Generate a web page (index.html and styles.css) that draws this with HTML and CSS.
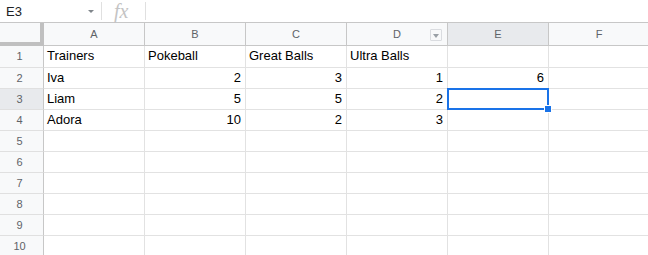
FILE: index.html
```html
<!DOCTYPE html>
<html lang="en">
<head>
    <meta charset="UTF-8">
    <meta name="viewport" content="width=device-width, initial-scale=1.0">
    <title>Pokeballs</title>
    <link rel="stylesheet" href="styles.css">
</head>
<body>
    <div class="toolbar">
        <div class="namebox">E3</div>
        <div class="namebox-arrow"></div>
        <div class="sep"></div>
        <div class="fx">fx</div>
        <div class="sep"></div>
    </div>
    <div class="sheet">
        <div class="corner"></div>
        <div class="col-head">A</div>
        <div class="col-head">B</div>
        <div class="col-head">C</div>
        <div class="col-head filtered">D<span class="filter-btn"></span></div>
        <div class="col-head active">E</div>
        <div class="col-head">F</div>

        <div class="row-head">1</div>
        <div class="cell">Trainers</div>
        <div class="cell">Pokeball</div>
        <div class="cell">Great Balls</div>
        <div class="cell">Ultra Balls</div>
        <div class="cell"></div>
        <div class="cell"></div>

        <div class="row-head">2</div>
        <div class="cell">Iva</div>
        <div class="cell num">2</div>
        <div class="cell num">3</div>
        <div class="cell num">1</div>
        <div class="cell num">6</div>
        <div class="cell"></div>

        <div class="row-head active">3</div>
        <div class="cell">Liam</div>
        <div class="cell num">5</div>
        <div class="cell num">5</div>
        <div class="cell num">2</div>
        <div class="cell selected"></div>
        <div class="cell"></div>

        <div class="row-head">4</div>
        <div class="cell">Adora</div>
        <div class="cell num">10</div>
        <div class="cell num">2</div>
        <div class="cell num">3</div>
        <div class="cell"></div>
        <div class="cell"></div>

        <div class="row-head">5</div>
        <div class="cell"></div><div class="cell"></div><div class="cell"></div><div class="cell"></div><div class="cell"></div><div class="cell"></div>
        <div class="row-head">6</div>
        <div class="cell"></div><div class="cell"></div><div class="cell"></div><div class="cell"></div><div class="cell"></div><div class="cell"></div>
        <div class="row-head">7</div>
        <div class="cell"></div><div class="cell"></div><div class="cell"></div><div class="cell"></div><div class="cell"></div><div class="cell"></div>
        <div class="row-head">8</div>
        <div class="cell"></div><div class="cell"></div><div class="cell"></div><div class="cell"></div><div class="cell"></div><div class="cell"></div>
        <div class="row-head">9</div>
        <div class="cell"></div><div class="cell"></div><div class="cell"></div><div class="cell"></div><div class="cell"></div><div class="cell"></div>
        <div class="row-head">10</div>
        <div class="cell"></div><div class="cell"></div><div class="cell"></div><div class="cell"></div><div class="cell"></div><div class="cell"></div>
    </div>
</body>
</html>
```

FILE: styles.css
```css
body {
    font-family: "Liberation Sans", Arial, sans-serif;
    margin: 0;
    padding: 0;
    background: white;
    overflow: hidden;
}

.toolbar {
    display: flex;
    align-items: center;
    height: 22px;
    border-bottom: 1px solid #c7c7c7;
}

.namebox {
    width: 80px;
    padding-left: 6px;
    font-size: 13px;
    color: #202124;
}

.namebox-arrow {
    width: 0;
    height: 0;
    margin: 1px 7px 0 2px;
    border-left: 3px solid transparent;
    border-right: 3px solid transparent;
    border-top: 3px solid #80868b;
}

.sep {
    width: 1px;
    height: 18px;
    background: #e0e0e0;
}

.fx {
    width: 31px;
    padding-left: 12px;
    font-family: "Liberation Serif", serif;
    font-style: italic;
    font-size: 20px;
    color: #c4c4c4;
    line-height: 22px;
}

.sheet {
    display: grid;
    grid-template-columns: 44px repeat(6, 101px);
    grid-template-rows: 23px 22px repeat(9, 21px);
}

.sheet > div {
    box-sizing: border-box;
}

.corner {
    background: #f8f9fa;
    border-right: 4px solid #c0c0c0;
    border-bottom: 4px solid #c0c0c0;
}

.col-head {
    position: relative;
    background: #f8f9fa;
    border-right: 1px solid #c7c7c7;
    border-bottom: 1px solid #c7c7c7;
    color: #5f6368;
    font-size: 11px;
    text-align: center;
    line-height: 22px;
}

.row-head {
    background: #f8f9fa;
    border-right: 1px solid #c7c7c7;
    border-bottom: 1px solid #e0e0e0;
    color: #5f6368;
    font-size: 11px;
    text-align: center;
    line-height: 20px;
    padding-right: 4px;
}

.col-head.active,
.row-head.active {
    background: #e8eaed;
}

.filter-btn {
    position: absolute;
    top: 6px;
    right: 5px;
    width: 12px;
    height: 12px;
    box-sizing: border-box;
    border: 1px solid #dadce0;
    border-radius: 1px;
    background: #f8f9fa;
}

.filter-btn::after {
    content: "";
    position: absolute;
    top: 4px;
    left: 2px;
    border-left: 3px solid transparent;
    border-right: 3px solid transparent;
    border-top: 4px solid #9aa0a6;
}

.cell {
    position: relative;
    border-right: 1px solid #e2e2e2;
    border-bottom: 1px solid #e2e2e2;
    font-size: 13px;
    color: #000;
    padding: 0 3px;
    line-height: 20px;
    white-space: nowrap;
}

.cell.num {
    text-align: right;
    padding-right: 4px;
}

.cell.selected::after {
    content: "";
    position: absolute;
    top: -1px;
    left: -1px;
    right: -1px;
    bottom: -1px;
    border: 2px solid #1a73e8;
}

.cell.selected::before {
    content: "";
    position: absolute;
    right: -4px;
    bottom: -4px;
    width: 6px;
    height: 6px;
    background: #1a73e8;
    border: 1px solid white;
    z-index: 1;
}
```
